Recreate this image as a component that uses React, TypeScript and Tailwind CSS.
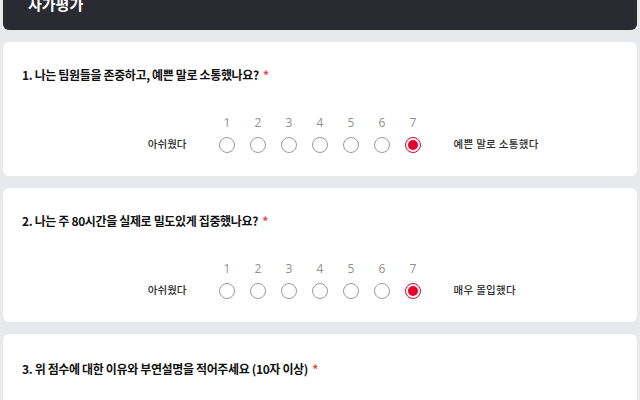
/** Self-evaluation form — linear scale questions. */
const FONT = "font-['Noto_Sans_CJK_KR','Noto_Sans',sans-serif]";

type Scale = { no: number; q: string; left: string; right: string; value: number };

const scales: Scale[] = [
  { no: 1, q: "나는 팀원들을 존중하고, 예쁜 말로 소통했나요?", left: "아쉬웠다", right: "예쁜 말로 소통했다", value: 7 },
  { no: 2, q: "나는 주 80시간을 실제로 밀도있게 집중했나요?", left: "아쉬웠다", right: "매우 몰입했다", value: 7 },
];

function Title({ no, text }: { no: number; text: string }) {
  return (
    <div className="text-[12px] font-bold leading-[16px] tracking-[-0.03em] text-[#111]">
      {no}. {text} <span className="ml-[2px] text-[#e5484d]">*</span>
    </div>
  );
}

function Radio({ on }: { on: boolean }) {
  if (on)
    return (
      <span className="flex h-[16px] w-[16px] items-center justify-center rounded-full border border-[#e8002d]">
        <span className="h-[10px] w-[10px] rounded-full bg-[#e8002d]" />
      </span>
    );
  return <span className="block h-[16px] w-[16px] rounded-full border border-[#9b9b9b] bg-white" />;
}

function ScaleCard({ s }: { s: Scale }) {
  return (
    <div className="h-[134px] rounded-md bg-white px-[19px] pt-[25px]">
      <Title no={s.no} text={s.q} />
      <div className="mt-[32px] flex items-end justify-center">
        <div className="w-[120px] pb-[1px] text-right text-[10.5px] font-medium leading-[16px] text-[#2a2a2a]">{s.left}</div>
        <div className="mx-[25px] flex">
          {[1, 2, 3, 4, 5, 6, 7].map((n) => (
            <div key={n} className="flex w-[31px] flex-col items-center">
              <span className="font-['Open_Sans',sans-serif] text-[12px] font-normal leading-[16px] text-[#8f8f8f]">{n}</span>
              <span className="mt-[6px]"><Radio on={n === s.value} /></span>
            </div>
          ))}
        </div>
        <div className="w-[120px] pb-[1px] text-left text-[10.5px] font-medium leading-[16px] tracking-[0.03em] text-[#2a2a2a]">{s.right}</div>
      </div>
    </div>
  );
}

export default function App() {
  return (
    <div className={`h-[400px] w-[640px] overflow-hidden bg-[#e8e9ec] px-[3px] ${FONT}`}>
      <div className="h-[30px] overflow-hidden rounded-b-md bg-[#2a2a33] pl-[25px]">
        <div className="mt-[-6px] text-[15px] font-bold leading-[20px] text-white">자가평가</div>
      </div>
      <div className="mt-[12px] flex flex-col gap-[12px]">
        {scales.map((s) => (
          <ScaleCard key={s.no} s={s} />
        ))}
        <div className="h-[134px] rounded-md bg-white px-[19px] pt-[27px]">
          <Title no={3} text="위 점수에 대한 이유와 부연설명을 적어주세요 (10자 이상)" />
        </div>
      </div>
    </div>
  );
}
